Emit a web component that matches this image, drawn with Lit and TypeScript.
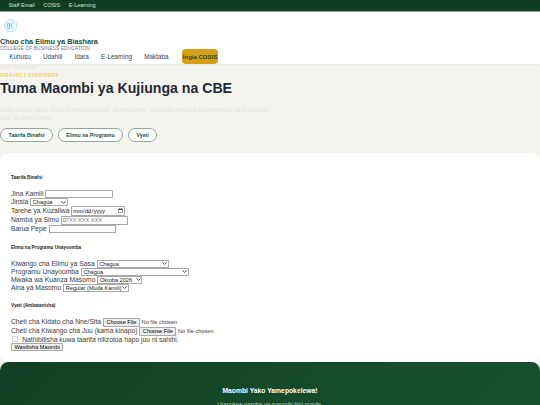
import { LitElement, html, css } from "lit";
import { customElement } from "lit/decorators.js";

@customElement("app-root")
export class AppRoot extends LitElement {
  static styles = css`
    :host { display: block; zoom: 0.421875; font-family: "Liberation Sans", Arial, sans-serif; background: #f5f4ef; color: #1f2937; }
    a { color: inherit; text-decoration: none; }
    .top { background: #0f3d24; color: #d7e2da; height: 26px; padding: 0 20px; display: flex; align-items: center; gap: 20px; font-size: 13px; border-bottom: 1px solid #8fa898; }
    .head { background: #fff; height: 124px; box-shadow: 0 2px 6px rgba(0,0,0,.06); display: flex; flex-direction: column; position: relative; }
    .logo { width: 36px; height: 36px; margin: 16px 0 0 8px; display: block; }
    .brand { margin-top: 13px; }
    .name { font-size: 17.3px; font-weight: 700; color: #1c4d32; line-height: 20px; }
    .sub { font-size: 11.5px; letter-spacing: .3px; color: #6b7280; line-height: 12px; }
    nav { display: flex; align-items: center; padding-left: 22px; gap: 29px; font-size: 15px; color: #374151; height: 36px; margin-top: -5px; }
    .cta { background: #d4a017; color: #2c4a22; font-weight: 600; font-size: 14.3px; border-radius: 9px; padding: 0 2px; height: 36px; display: flex; align-items: center; margin-left: 3px; }
    .hero { padding: 0 0 26px; }
    .crumb { font-size: 13px; color: #e4e4df; line-height: 18px; }
    .eyebrow { font-size: 13px; font-weight: 700; letter-spacing: 1.3px; color: #f0cb6a; line-height: 16px; }
    h1 { font-size: 33.5px; font-weight: 700; margin: 2px 0 0; color: #1f2937; line-height: 44px; }
    .lead { font-size: 16px; line-height: 19px; color: #e6e8e1; margin: 20px 0 0; }
    .pills { display: flex; gap: 11px; margin-top: 13px; }
    .pill { height: 34px; padding: 0 18px; border: 1.5px solid #8fa898; border-radius: 17px; background: #fff; font-size: 12.5px; font-weight: 700; color: #1c4d32; display: flex; align-items: center; box-sizing: border-box; }
    .card { background: #fff; border-radius: 20px; padding: 52px 26px 25px; font-size: 16px; color: #3a3a3a; }
    h3 { font-size: 11px; font-weight: 700; margin: 0 0 20px; line-height: 14px; color: #222; }
    h3.next { margin-top: 28px; }
    input, select, button { font-family: "Liberation Sans", Arial, sans-serif; }
    input[type="text"], input[type="tel"], input[type="email"], input[type="date"] { border: 1px solid #a8a8a8; border-radius: 2px; }
    input[type="file"]::file-selector-button { border: 1px solid #a8a8a8; border-radius: 2px; background: #efefef; }
    input[type="checkbox"] { width: 14px; height: 14px; margin: 0 5px 0 3px; vertical-align: -2px; }
    button { border: 1px solid #a8a8a8; border-radius: 2px; background: #efefef; }
    select {
      appearance: none;
      border: 1px solid #a8a8a8;
      border-radius: 2px;
      background: #fff url("data:image/svg+xml,%3Csvg xmlns='http://www.w3.org/2000/svg' width='11' height='7'%3E%3Cpath d='M1 1l4.5 4.5L10 1' fill='none' stroke='%23333' stroke-width='2'/%3E%3C/svg%3E") no-repeat right 3px center;
      height: 19px;
      padding: 0 12px 0 4px;
      font-size: 13.33px;
      color: #222;
      box-sizing: border-box;
    }
    .w-text { width: 159px; box-sizing: border-box; }
    .w-sex { width: 90px; }
    .w-level { width: 171px; }
    .w-prog { width: 256px; }
    .w-year { width: 107px; }
    .w-mode { width: 156px; }
    .row { display: block; }
    .foot { background: linear-gradient(135deg, #123f25, #17532f); border-radius: 20px 20px 0 0; color: #fff; text-align: center; padding: 60px 20px 40px; }
    .foot h2 { font-size: 16px; line-height: 18px; margin: 0 0 14px; }
    .foot p { font-size: 14px; color: #b8c9bd; margin: 0; }
  `;

  render() {
    return html`
      <div class="top"><a>Staff Email</a><a>COSIS</a><a>E-Learning</a></div>
      <header class="head">
        <svg class="logo" viewBox="0 0 36 36">
          <circle cx="18" cy="18" r="16.5" fill="#eaf7fd" stroke="#9bdcf4" stroke-width="2"/>
          <path d="M12 10c-4 5-4 12 1 17M24 9l-6 9 7 9M15 10v16" fill="none" stroke="#4fb3dc" stroke-width="2"/>
        </svg>
        <div class="brand">
          <div class="name">Chuo cha Elimu ya Biashara</div>
          <div class="sub">COLLEGE OF BUSINESS EDUCATION</div>
        </div>
        <nav><a>Kuhusu</a><a>Udahili</a><a>Idara</a><a>E-Learning</a><a>Maktaba</a><a class="cta">Ingia COSIS</a></nav>
      </header>
      <section class="hero">
        <div class="crumb">Rudi Nyumbani</div>
        <div class="eyebrow">UDAHILI 2026/2027</div>
        <h1>Tuma Maombi ya Kujiunga na CBE</h1>
        <p class="lead">Jaza fomu hapa chini kuomba nafasi ya masomo. Utapata namba ya maombi ya kufuatilia<br>hali ya ombi lako.</p>
        <div class="pills"><a class="pill">Taarifa Binafsi</a><a class="pill">Elimu na Programu</a><a class="pill">Vyeti</a></div>
      </section>
      <section class="card">
        <form>
          <h3>Taarifa Binafsi</h3>
          <div class="row">Jina Kamili <input class="w-text" type="text"></div>
          <div class="row">Jinsia <select class="w-sex"><option>Chagua</option></select></div>
          <div class="row">Tarehe ya Kuzaliwa <input type="date"></div>
          <div class="row">Namba ya Simu <input class="w-text" type="tel" placeholder="07XX XXX XXX"></div>
          <div class="row">Barua Pepe <input class="w-text" type="email"></div>
          <h3 class="next">Elimu na Programu Unayoomba</h3>
          <div class="row">Kiwango cha Elimu ya Sasa <select class="w-level"><option>Chagua</option></select></div>
          <div class="row">Programu Unayoomba <select class="w-prog"><option>Chagua</option></select></div>
          <div class="row">Mwaka wa Kuanza Masomo <select class="w-year"><option>Oktoba 2026</option></select></div>
          <div class="row">Aina ya Masomo <select class="w-mode"><option>Regular (Muda Kamili)</option></select></div>
          <h3 class="next">Vyeti (Ambatanisha)</h3>
          <div class="row">Cheti cha Kidato cha Nne/Sita <input type="file"></div>
          <div class="row">Cheti cha Kiwango cha Juu (kama kinapo) <input type="file"></div>
          <div class="row"><input type="checkbox"> Nathibitisha kuwa taarifa nilizotoa hapo juu ni sahihi.</div>
          <div class="row"><button type="button">Wasilisha Maombi</button></div>
        </form>
      </section>
      <footer class="foot">
        <h2>Maombi Yako Yamepokelewa!</h2>
        <p>Utapokea namba ya maombi hivi punde.</p>
      </footer>
    `;
  }
}
